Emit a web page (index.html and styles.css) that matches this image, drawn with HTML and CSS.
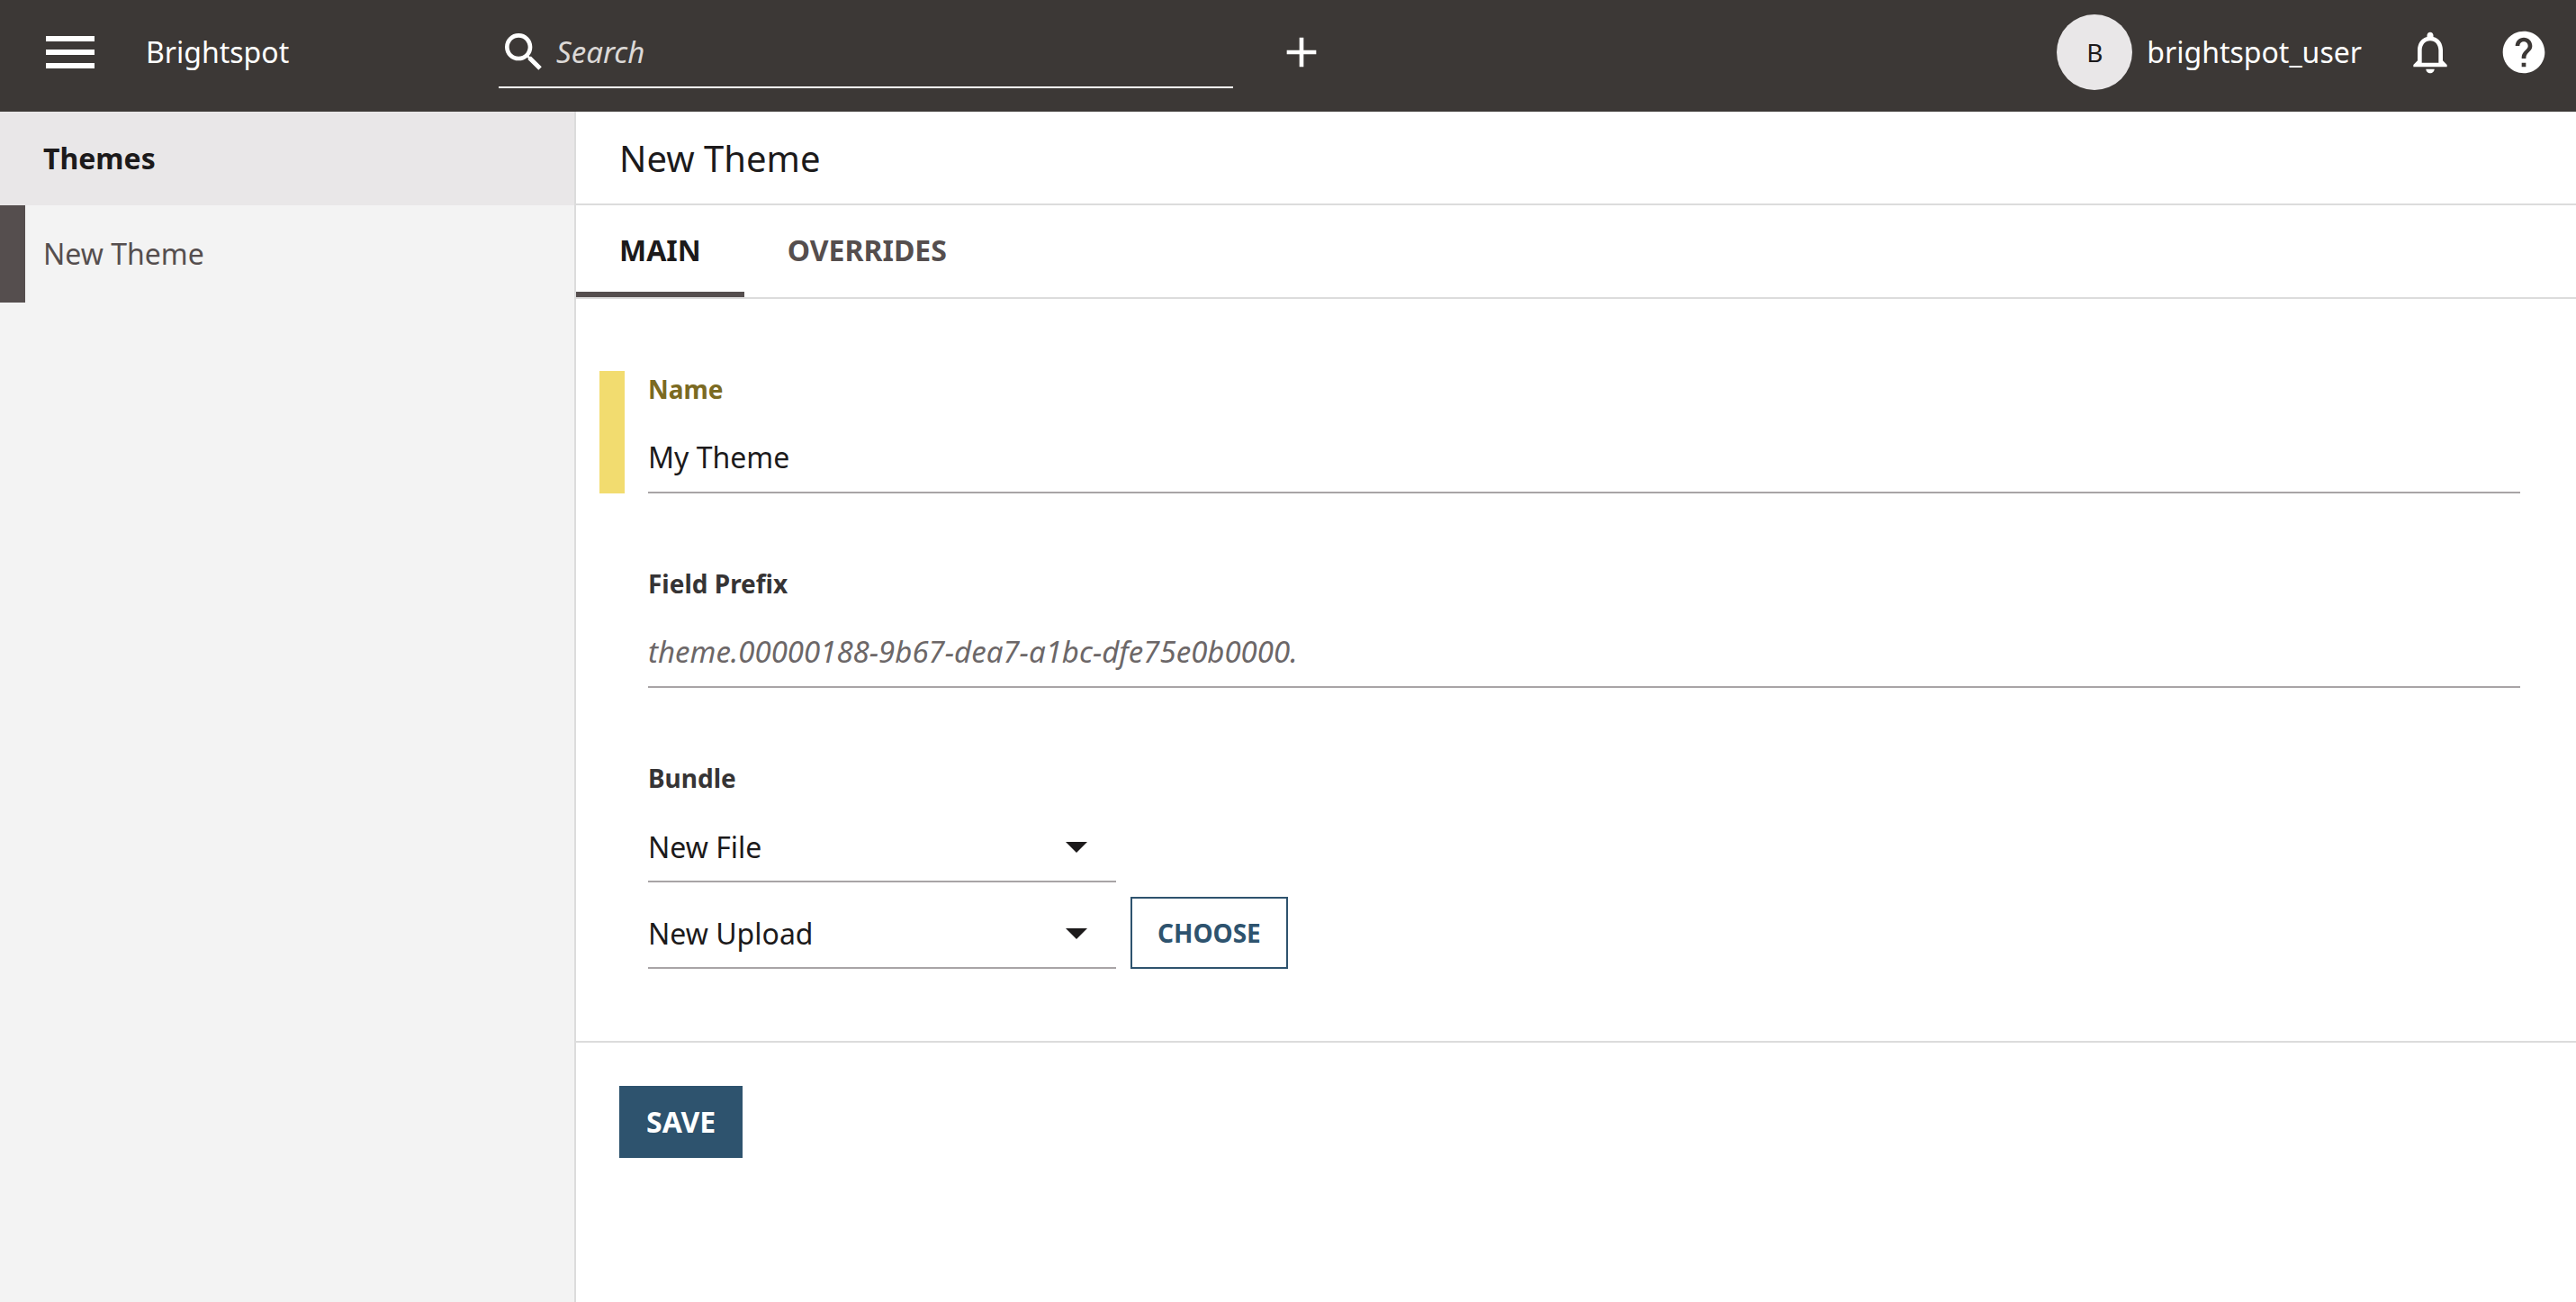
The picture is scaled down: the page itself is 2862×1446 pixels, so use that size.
FILE: index.html
```html
<!DOCTYPE html>
<html lang="en">
<head>
  <meta charset="utf-8">
  <meta name="viewport" content="width=device-width, initial-scale=1">
  <title>New Theme | Brightspot</title>
  <link rel="stylesheet" href="styles.css">
</head>
<body>
  <header class="topbar">
    <div class="topbar-start">
      <button class="icon-button" type="button" aria-label="Menu">
        <svg class="icon icon-menu" viewBox="0 0 24 24" aria-hidden="true"><path d="M3 18h18v-2H3v2zm0-5h18v-2H3v2zm0-7v2h18V6H3z"/></svg>
      </button>
      <a class="brand" href="#">Brightspot</a>
    </div>
    <form class="search" role="search">
      <svg class="icon" viewBox="0 0 24 24" aria-hidden="true"><path d="M15.5 14h-.79l-.28-.27A6.471 6.471 0 0 0 16 9.5 6.5 6.5 0 1 0 9.5 16c1.61 0 3.09-.59 4.23-1.57l.27.28v.79l5 4.99L20.49 19l-4.99-5zm-6 0C7.01 14 5 11.99 5 9.5S7.01 5 9.5 5 14 7.01 14 9.5 11.99 14 9.5 14z"/></svg>
      <input class="search-input" type="search" placeholder="Search" aria-label="Search">
    </form>
    <button class="icon-button" type="button" aria-label="Create">
      <svg class="icon" viewBox="0 0 24 24" aria-hidden="true"><path d="M19 13h-6v6h-2v-6H5v-2h6V5h2v6h6v2z"/></svg>
    </button>
    <div class="topbar-end">
      <a class="user" href="#">
        <span class="avatar">B</span>
        <span>brightspot_user</span>
      </a>
      <button class="icon-button" type="button" aria-label="Notifications">
        <svg class="icon" viewBox="0 0 24 24" aria-hidden="true"><path d="M12 22c1.1 0 2-.9 2-2h-4c0 1.1.9 2 2 2zm6-6v-5c0-3.07-1.63-5.64-4.5-6.32V4c0-.83-.67-1.5-1.5-1.5s-1.500.67-1.500 1.500v.68C7.640 5.360 6 7.920 6 11v5l-2 2v1h16v-1l-2-2zm-2 1H8v-6c0-2.480 1.510-4.500 4-4.500s4 2.020 4 4.500v6z"/></svg>
      </button>
      <button class="icon-button" type="button" aria-label="Help">
        <svg class="icon" viewBox="0 0 24 24" aria-hidden="true"><path d="M12 2C6.480 2 2 6.480 2 12s4.480 10 10 10 10-4.480 10-10S17.520 2 12 2zm1 17h-2v-2h2v2zm2.070-7.750l-.9.920C13.450 12.900 13 13.500 13 15h-2v-.5c0-1.100.45-2.100 1.170-2.830l1.240-1.260c.37-.36.59-.86.59-1.410 0-1.100-.9-2-2-2s-2 .9-2 2H8c0-2.210 1.790-4 4-4s4 1.790 4 4c0 .88-.36 1.680-.93 2.250z"/></svg>
      </button>
    </div>
  </header>

  <div class="workspace">
    <nav class="sidebar" aria-labelledby="sidebar-title">
      <h2 class="sidebar-title" id="sidebar-title">Themes</h2>
      <a class="sidebar-item" href="#" aria-current="page">New Theme</a>
    </nav>

    <main class="content">
      <h1 class="page-title">New Theme</h1>
      <div class="tabs" role="tablist">
        <button class="tab tab-active" type="button" role="tab" aria-selected="true">MAIN</button>
        <button class="tab" type="button" role="tab" aria-selected="false">OVERRIDES</button>
      </div>
      <form class="editor">
        <div class="fields">
          <div class="field field-changed">
            <label class="label" for="name">Name</label>
            <input class="control" id="name" type="text" value="My Theme">
          </div>
          <div class="field">
            <label class="label" for="prefix">Field Prefix</label>
            <input class="control" id="prefix" type="text" placeholder="theme.00000188-9b67-dea7-a1bc-dfe75e0b0000.">
          </div>
          <div class="field">
            <label class="label" for="bundle">Bundle</label>
            <select class="control select" id="bundle"><option>New File</option></select>
            <div class="field-row">
              <select class="control select" aria-label="Bundle source"><option>New Upload</option></select>
              <button class="button button-outline" type="button">CHOOSE</button>
            </div>
          </div>
        </div>
        <div class="actions">
          <button class="button button-primary" type="button">SAVE</button>
        </div>
      </form>
    </main>
  </div>
</body>
</html>
```

FILE: styles.css
```css
:root {
  --ink: #1c1a1b;
  --chrome: #3c3836;
  --accent: #554e4e;
  --line: #dcdcdc;
  --control-line: #a8a4a6;
  --blue: #2e536e;
}

* {
  box-sizing: border-box;
}

body {
  display: flex;
  flex-direction: column;
  min-height: 100vh;
  margin: 0;
  background: #fff;
  color: var(--ink);
  font: 32px/44px "Noto Sans", sans-serif;
}

button,
input,
select {
  margin: 0;
  padding: 0;
  border: 0;
  border-radius: 0;
  outline: 0;
  background: none;
  color: inherit;
  font: inherit;
}

a {
  color: inherit;
  text-decoration: none;
}

/* Top bar */

.topbar {
  display: flex;
  align-items: center;
  height: 124px;
  padding: 0 30px 8px 0;
  background: var(--chrome);
  color: #fff;
}

.topbar-start {
  display: flex;
  align-items: center;
  gap: 48px;
  width: 554px;
  padding-left: 42px;
}

.icon-button {
  display: flex;
}

.icon {
  flex: none;
  width: 56px;
  height: 56px;
  fill: currentColor;
}

.icon-menu {
  width: 72px;
  height: 72px;
}

.search {
  display: flex;
  align-items: center;
  gap: 8px;
  width: 816px;
  height: 80px;
  margin-right: 48px;
  box-shadow: inset 0 -2px #fff;
}

.search-input {
  flex: 1;
  min-width: 0;
  appearance: none;
}

.search-input::placeholder {
  color: #dcd9d7;
  font-size: 33px;
  font-style: italic;
  opacity: 1;
}

.topbar-end {
  display: flex;
  align-items: center;
  gap: 48px;
  margin-left: auto;
}

.user {
  display: flex;
  align-items: center;
  gap: 16px;
}

.avatar {
  display: grid;
  place-items: center;
  width: 84px;
  height: 84px;
  border-radius: 50%;
  background: #e9e7e8;
  color: var(--ink);
  font-size: 28px;
}

/* Sidebar */

.workspace {
  display: flex;
  flex: 1;
}

.sidebar {
  flex: none;
  width: 640px;
  border-right: 2px solid var(--line);
  background: #f3f3f3;
}

.sidebar-title {
  margin: 0;
  padding: 30px 48px;
  background: #e9e7e8;
  font-size: 32px;
}

.sidebar-item {
  display: block;
  padding: 32px 20px;
  border-left: 28px solid var(--accent);
  color: var(--accent);
}

/* Content */

.content {
  flex: 1;
  min-width: 0;
}

.page-title {
  margin: 0;
  padding: 30px 48px 28px;
  border-bottom: 2px solid var(--line);
  font-size: 40px;
  font-weight: 400;
}

.tabs {
  display: flex;
  border-bottom: 2px solid var(--line);
}

.tab {
  padding: 28px 48px 30px;
  color: var(--accent);
  font-weight: 700;
}

.tab-active {
  box-shadow: inset 0 -6px var(--accent);
  color: var(--ink);
}

.fields {
  display: flex;
  flex-direction: column;
  gap: 80px;
  padding: 80px 62px 80px 26px;
}

.field {
  display: flex;
  flex-direction: column;
  align-items: flex-start;
  gap: 16px;
  padding-left: 26px;
  border-left: 28px solid transparent;
}

.field-changed {
  border-color: #f2dc6f;
}

.label {
  color: #363435;
  font-size: 28px;
  font-weight: 700;
  line-height: 40px;
}

.field-changed .label {
  color: #7b6a22;
}

.control {
  width: 100%;
  height: 80px;
  border-bottom: 2px solid var(--control-line);
}

.control::placeholder {
  color: #6c6768;
  font-size: 33px;
  font-style: italic;
  opacity: 1;
}

.select {
  width: 520px;
  padding-top: 4px;
  appearance: none;
  background: url("data:image/svg+xml,%3Csvg xmlns='http://www.w3.org/2000/svg' viewBox='0 0 24 12'%3E%3Cpath fill='%231c1a1b' d='M0 0h24L12 12z'/%3E%3C/svg%3E") no-repeat right 32px center / 24px 12px content-box;
}

.field-row {
  display: flex;
  gap: 16px;
}

.button {
  height: 80px;
  padding: 0 30px;
  font-weight: 700;
}

.button-outline {
  border: 2px solid var(--blue);
  padding: 0 28px;
  color: var(--blue);
  font-size: 28px;
}

.button-primary {
  background: var(--blue);
  color: #fff;
}

.actions {
  padding: 48px;
  border-top: 2px solid var(--line);
}
```
